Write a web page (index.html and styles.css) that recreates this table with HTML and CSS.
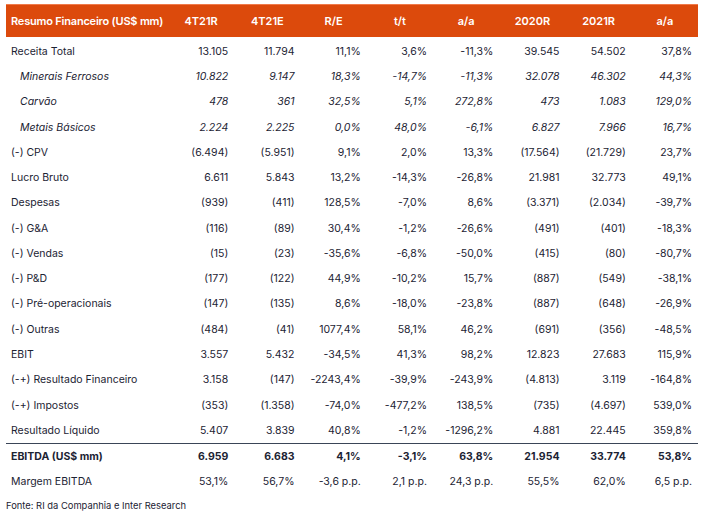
FILE: index.html
```html
<!DOCTYPE html>
<html lang="pt">
<head>
<meta charset="utf-8">
<title>Resumo Financeiro</title>
<link rel="stylesheet" href="styles.css">
</head>
<body>
<div class="wrap">
<table class="fin">
  <colgroup>
    <col class="c-label"><col class="c-num"><col class="c-num"><col class="c-num"><col class="c-num"><col class="c-num"><col class="c-num"><col class="c-num"><col class="c-num">
  </colgroup>
  <thead>
    <tr>
      <th class="lbl">Resumo Financeiro (US$ mm)</th>
      <th>4T21R</th><th>4T21E</th><th>R/E</th><th>t/t</th><th>a/a</th><th>2020R</th><th>2021R</th><th>a/a</th>
    </tr>
  </thead>
  <tbody>
    <tr class="first"><td class="lbl">Receita Total</td><td>13.105</td><td>11.794</td><td>11,1%</td><td>3,6%</td><td>-11,3%</td><td>39.545</td><td>54.502</td><td>37,8%</td></tr>
    <tr class="sub"><td class="lbl">Minerais Ferrosos</td><td>10.822</td><td>9.147</td><td>18,3%</td><td>-14,7%</td><td>-11,3%</td><td>32.078</td><td>46.302</td><td>44,3%</td></tr>
    <tr class="sub"><td class="lbl">Carvão</td><td>478</td><td>361</td><td>32,5%</td><td>5,1%</td><td>272,8%</td><td>473</td><td>1.083</td><td>129,0%</td></tr>
    <tr class="sub"><td class="lbl">Metais Básicos</td><td>2.224</td><td>2.225</td><td>0,0%</td><td>48,0%</td><td>-6,1%</td><td>6.827</td><td>7.966</td><td>16,7%</td></tr>
    <tr><td class="lbl">(-) CPV</td><td>(6.494)</td><td>(5.951)</td><td>9,1%</td><td>2,0%</td><td>13,3%</td><td>(17.564)</td><td>(21.729)</td><td>23,7%</td></tr>
    <tr><td class="lbl">Lucro Bruto</td><td>6.611</td><td>5.843</td><td>13,2%</td><td>-14,3%</td><td>-26,8%</td><td>21.981</td><td>32.773</td><td>49,1%</td></tr>
    <tr><td class="lbl">Despesas</td><td>(939)</td><td>(411)</td><td>128,5%</td><td>-7,0%</td><td>8,6%</td><td>(3.371)</td><td>(2.034)</td><td>-39,7%</td></tr>
    <tr><td class="lbl">(-) G&amp;A</td><td>(116)</td><td>(89)</td><td>30,4%</td><td>-1,2%</td><td>-26,6%</td><td>(491)</td><td>(401)</td><td>-18,3%</td></tr>
    <tr><td class="lbl">(-) Vendas</td><td>(15)</td><td>(23)</td><td>-35,6%</td><td>-6,8%</td><td>-50,0%</td><td>(415)</td><td>(80)</td><td>-80,7%</td></tr>
    <tr><td class="lbl">(-) P&amp;D</td><td>(177)</td><td>(122)</td><td>44,9%</td><td>-10,2%</td><td>15,7%</td><td>(887)</td><td>(549)</td><td>-38,1%</td></tr>
    <tr><td class="lbl">(-) Pré-operacionais</td><td>(147)</td><td>(135)</td><td>8,6%</td><td>-18,0%</td><td>-23,8%</td><td>(887)</td><td>(648)</td><td>-26,9%</td></tr>
    <tr><td class="lbl">(-) Outras</td><td>(484)</td><td>(41)</td><td>1077,4%</td><td>58,1%</td><td>46,2%</td><td>(691)</td><td>(356)</td><td>-48,5%</td></tr>
    <tr><td class="lbl">EBIT</td><td>3.557</td><td>5.432</td><td>-34,5%</td><td>41,3%</td><td>98,2%</td><td>12.823</td><td>27.683</td><td>115,9%</td></tr>
    <tr><td class="lbl">(-+) Resultado Financeiro</td><td>3.158</td><td>(147)</td><td>-2243,4%</td><td>-39,9%</td><td>-243,9%</td><td>(4.813)</td><td>3.119</td><td>-164,8%</td></tr>
    <tr><td class="lbl">(-+) Impostos</td><td>(353)</td><td>(1.358)</td><td>-74,0%</td><td>-477,2%</td><td>138,5%</td><td>(735)</td><td>(4.697)</td><td>539,0%</td></tr>
    <tr class="last"><td class="lbl">Resultado Líquido</td><td>5.407</td><td>3.839</td><td>40,8%</td><td>-1,2%</td><td>-1296,2%</td><td>4.881</td><td>22.445</td><td>359,8%</td></tr>
    <tr class="bold"><td class="lbl">EBITDA (US$ mm)</td><td>6.959</td><td>6.683</td><td>4,1%</td><td>-3,1%</td><td>63,8%</td><td>21.954</td><td>33.774</td><td>53,8%</td></tr>
    <tr><td class="lbl">Margem EBITDA</td><td>53,1%</td><td>56,7%</td><td>-3,6 p.p.</td><td>2,1 p.p.</td><td>24,3 p.p.</td><td>55,5%</td><td>62,0%</td><td>6,5 p.p.</td></tr>
  </tbody>
</table>
<p class="source">Fonte: RI da Companhia e Inter Research</p>
</div>
</body>
</html>
```
FILE: styles.css
```css
html, body {
  margin: 0;
  padding: 0;
  background: #ffffff;
}
body {
  font-family: Inter, "Noto Sans", sans-serif;
  color: #1c2333;
  font-size: 10.5px;
}
.wrap {
  padding: 4px 11px 0 6px;
}
.fin {
  width: 692px;
  border-collapse: collapse;
  table-layout: fixed;
}
.c-label { width: 162px; }
.c-num { width: 66.25px; }
.fin thead th {
  background: #dc4a0c;
  color: #ffffff;
  font-size: 11px;
  font-weight: 600;
  height: 32px;
  padding: 0;
  text-align: center;
  border-top: 1px solid #f07a4a;
  white-space: nowrap;
}
.fin thead th.lbl {
  text-align: left;
  padding-left: 5px;
  letter-spacing: -0.2px;
}
.fin td {
  height: 25.27px;
  padding: 0 6px 0 0;
  text-align: right;
  white-space: nowrap;
}
.fin td.lbl {
  text-align: left;
  padding-left: 5px;
}
.first td {
  padding-top: 1.7px;
}
.sub td {
  font-style: italic;
}
.sub td.lbl {
  padding-left: 14px;
}
.last td {
  border-bottom: 1.5px solid #3a4557;
}
.bold td {
  font-weight: 700;
}
.source {
  margin: 6px 0 0 0;
  font-size: 9.4px;
  color: #1c2333;
}
```
